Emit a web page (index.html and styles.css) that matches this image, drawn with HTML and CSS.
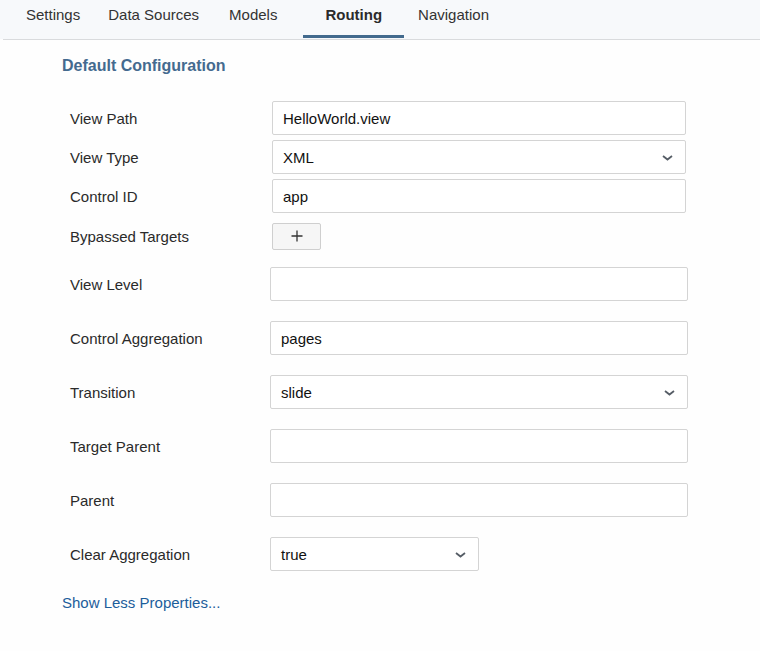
FILE: index.html
```html
<!DOCTYPE html>
<html lang="en">
<head>
<meta charset="utf-8">
<title>Routing</title>
<link rel="stylesheet" href="styles.css">
</head>
<body>
<div class="page">
  <nav class="tabs">
    <a class="tab">Settings</a>
    <a class="tab">Data Sources</a>
    <a class="tab tab-models">Models</a>
    <a class="tab tab-active">Routing</a>
    <a class="tab">Navigation</a>
  </nav>
  <div class="tabs-line"></div>

  <section class="content">
    <h2 class="heading">Default Configuration</h2>

    <div class="group group-tight">
      <div class="row">
        <label class="label">View Path</label>
        <div class="field">HelloWorld.view</div>
      </div>
      <div class="row">
        <label class="label">View Type</label>
        <div class="field select">XML
          <svg class="chev" width="11" height="6" viewBox="0 0 11 6"><path d="M1 1 L5.5 4.5 L10 1" fill="none" stroke="#565d66" stroke-width="1.8"/></svg>
        </div>
      </div>
      <div class="row">
        <label class="label">Control ID</label>
        <div class="field">app</div>
      </div>
      <div class="row row-btn">
        <label class="label">Bypassed Targets</label>
        <button class="add-btn" type="button">
          <svg width="12" height="12" viewBox="0 0 12 12"><path d="M6 0.5 V11.5 M0.5 6 H11.5" stroke="#333" stroke-width="1.3" fill="none"/></svg>
        </button>
      </div>
    </div>

    <div class="group group-wide">
      <div class="row">
        <label class="label">View Level</label>
        <div class="field"></div>
      </div>
      <div class="row">
        <label class="label">Control Aggregation</label>
        <div class="field">pages</div>
      </div>
      <div class="row">
        <label class="label">Transition</label>
        <div class="field select">slide
          <svg class="chev" width="11" height="6" viewBox="0 0 11 6"><path d="M1 1 L5.5 4.5 L10 1" fill="none" stroke="#565d66" stroke-width="1.8"/></svg>
        </div>
      </div>
      <div class="row">
        <label class="label">Target Parent</label>
        <div class="field"></div>
      </div>
      <div class="row">
        <label class="label">Parent</label>
        <div class="field"></div>
      </div>
      <div class="row">
        <label class="label">Clear Aggregation</label>
        <div class="field select field-short">true
          <svg class="chev" width="11" height="6" viewBox="0 0 11 6"><path d="M1 1 L5.5 4.5 L10 1" fill="none" stroke="#565d66" stroke-width="1.8"/></svg>
        </div>
      </div>
    </div>

    <a class="more-link">Show Less Properties...</a>
  </section>
</div>
</body>
</html>
```

FILE: styles.css
```css
* { box-sizing: border-box; }

html, body {
  margin: 0;
  padding: 0;
  background: #fefefe;
  font-family: "Liberation Sans", Arial, Helvetica, sans-serif;
  color: #222;
}

.page {
  width: 760px;
  height: 651px;
  background: #fefefe;
}

.tabs {
  display: flex;
  height: 39px;
  padding-left: 12px;
  background: #f7f9fb;
}

.tab {
  display: block;
  height: 38px;
  padding: 6px 14px 0;
  font-size: 15px;
  line-height: 18px;
  color: #333;
  border-bottom: 3px solid transparent;
}

.tab-models {
  padding-left: 16px;
  padding-right: 14px;
}

.tab-active {
  margin-left: 12px;
  padding-left: 22px;
  padding-right: 22px;
  font-weight: bold;
  color: #2b2b2b;
  border-bottom-color: #426a8d;
}

.tabs-line {
  margin-left: 3px;
  height: 1px;
  background: #d9dbdd;
}

.content {
  padding: 16px 0 0 62px;
}

.heading {
  margin: 0;
  font-size: 16px;
  line-height: 20px;
  font-weight: bold;
  color: #446a8f;
}

.group {
  display: flex;
  flex-direction: column;
  padding-left: 8px;
}

.group-tight {
  margin-top: 25px;
  gap: 5px;
}

.group-tight .label { width: 202px; }
.group-tight .field { width: 414px; }

.group-wide {
  margin-top: 14px;
  gap: 20px;
}

.group-wide .label { width: 200px; }
.group-wide .field { width: 418px; }
.group-wide .field.field-short { width: 209px; }

.row {
  display: flex;
  align-items: center;
  height: 34px;
}

.row-btn {
  margin-top: 1px;
}

.label {
  font-size: 15px;
  color: #2a2a2a;
  flex: none;
}

.field {
  position: relative;
  height: 34px;
  border: 1px solid #d4d4d4;
  border-radius: 2px;
  background: #fff;
  padding: 0 10px;
  font-size: 15px;
  line-height: 33px;
  color: #111;
}

.chev {
  position: absolute;
  right: 12px;
  top: 14px;
}

.add-btn {
  width: 49px;
  height: 27px;
  border: 1px solid #cfcfcf;
  border-radius: 2px;
  background: #f6f6f6;
  padding: 0;
  display: flex;
  align-items: center;
  justify-content: center;
}

.more-link {
  display: block;
  margin-top: 23px;
  font-size: 15px;
  line-height: 18px;
  color: #1c5d9b;
}
```
